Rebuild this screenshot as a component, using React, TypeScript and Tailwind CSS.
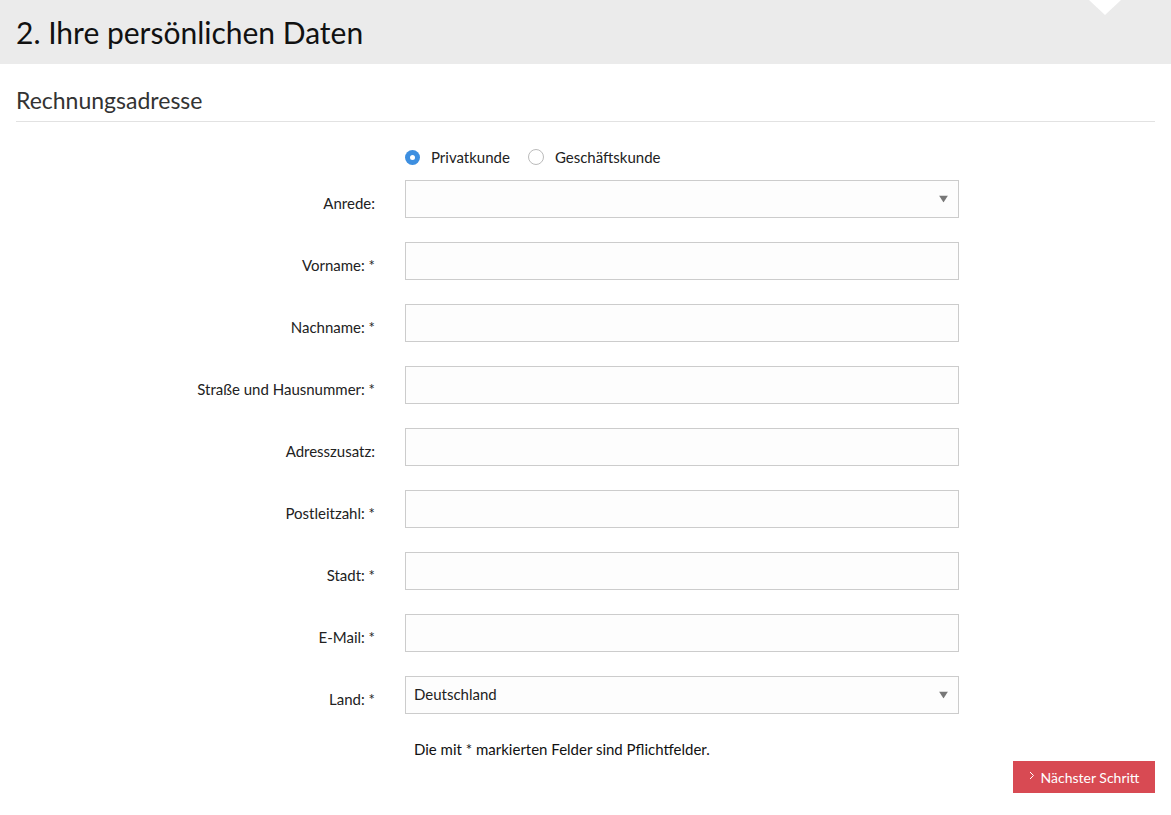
const fields = [
  { label: 'Vorname: *' },
  { label: 'Nachname: *' },
  { label: 'Straße und Hausnummer: *' },
  { label: 'Adresszusatz:' },
  { label: 'Postleitzahl: *' },
  { label: 'Stadt: *' },
  { label: 'E-Mail: *' },
];

function Caret() {
  return (
    <svg width="9" height="7" viewBox="0 0 9 7" className="absolute right-[10px] top-1/2 -translate-y-1/2">
      <path d="M0 0H9L4.5 7Z" fill="#777" />
    </svg>
  );
}

function Row({ label, children }: { label: string; children: React.ReactNode }) {
  return (
    <div className="flex items-center">
      <label className="w-[359px] pt-[10px] text-right text-[15px] text-[#222]">{label}</label>
      <div className="ml-[30px] w-[554px]">{children}</div>
    </div>
  );
}

export default function App() {
  return (
    <div className="min-h-[815px] bg-white" style={{ fontFamily: '"Source Sans Pro", Lato, "Liberation Sans", sans-serif' }}>
      <div className="relative h-[64px] bg-[#ebebeb] px-4 pt-[12px]">
        <h1 className="text-[30px] leading-[40px] text-[#111]">2. Ihre persönlichen Daten</h1>
        <div className="absolute right-[50px] top-0 h-0 w-0 border-x-[16px] border-t-[15px] border-x-transparent border-t-white" />
      </div>

      <div className="px-4">
        <h2 className="mt-[22px] border-b border-[#e2e2e2] pb-[6px] text-[23px] leading-[29px] text-[#333]">Rechnungsadresse</h2>

        <div className="mt-[24px] flex items-center gap-[11px] pl-[389px] text-[15px] text-[#222]">
          <span className="flex items-center gap-[11px]">
            <span className="flex h-[15px] w-[15px] items-center justify-center rounded-full bg-[#3d8fe0]">
              <span className="h-[5px] w-[5px] rounded-full bg-white" />
            </span>
            Privatkunde
          </span>
          <span className="ml-[7px] flex items-center gap-[11px]">
            <span className="h-[16px] w-[16px] rounded-full border border-[#bbb] bg-white" />
            Geschäftskunde
          </span>
        </div>

        <div className="mt-[11px] flex flex-col gap-[24px]">
          <Row label="Anrede:">
            <div className="relative h-[38px] border border-[#ccc] bg-[#fdfdfd]">
              <Caret />
            </div>
          </Row>
          {fields.map((f) => (
            <Row key={f.label} label={f.label}>
              <input className="block h-[38px] w-full border border-[#ccc] bg-[#fdfdfd] px-2 outline-none" />
            </Row>
          ))}
          <Row label="Land: *">
            <div className="relative flex h-[38px] items-center border border-[#ccc] bg-[#fdfdfd] px-[8px] text-[15px] text-[#222]">
              Deutschland
              <Caret />
            </div>
          </Row>
        </div>

        <p className="mt-[24px] pl-[398px] text-[15px] text-[#111]">Die mit * markierten Felder sind Pflichtfelder.</p>

        <div className="mt-[1px] flex justify-end">
          <button className="flex h-[32px] w-[142px] items-center justify-center gap-[6px] bg-[#d84a53] text-[14px] text-white">
            <svg width="6" height="9" viewBox="0 0 6 9" className="-mt-[3px]">
              <path d="M1 1L4.5 4.5L1 8" stroke="white" strokeWidth="1" fill="none" />
            </svg>
            Nächster Schritt
          </button>
        </div>
      </div>
    </div>
  );
}
